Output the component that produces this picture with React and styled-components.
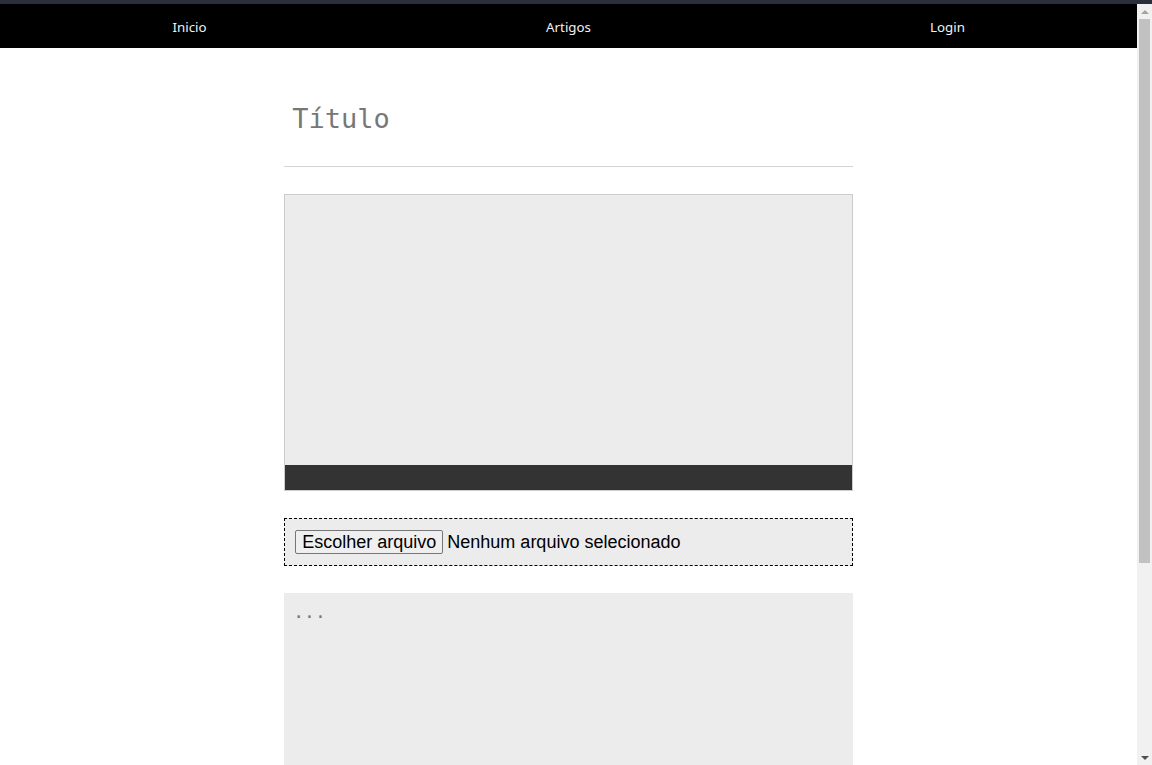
import React from 'react';
import styled, { createGlobalStyle } from 'styled-components';

const GlobalStyle = createGlobalStyle`
  html, body {
    margin: 0;
    padding: 0;
    height: 100%;
    overflow: hidden;
    background: #ffffff;
  }
  #root {
    height: 100%;
  }
  * {
    box-sizing: border-box;
  }
`;

const Frame = styled.div`
  height: 100vh;
  display: flex;
  border-top: 4px solid #2b2e3b;
`;

const Page = styled.div`
  flex: 1;
  min-width: 0;
  overflow-y: auto;
  scrollbar-width: none;
  background: #ffffff;

  &::-webkit-scrollbar {
    display: none;
  }
`;

// classic grey scrollbar drawn beside the page
const ScrollRail = styled.div`
  width: 15px;
  flex: none;
  display: flex;
  flex-direction: column;
  background: #f1f1f1;
`;

const ScrollArrow = styled.div`
  height: 15px;
  flex: none;
  display: flex;
  align-items: center;
  justify-content: center;
`;

const ArrowGlyph = styled.span`
  display: block;
  width: 0;
  height: 0;
  border-left: 4px solid transparent;
  border-right: 4px solid transparent;
  border-top: ${({ $down }) => ($down ? '4px solid #505050' : '0 solid transparent')};
  border-bottom: ${({ $down }) => ($down ? '0 solid transparent' : '4px solid #a3a3a3')};
`;

const ScrollTrack = styled.div`
  flex: 1;
  padding: 0 2px;
`;

const ScrollThumb = styled.div`
  height: 544px;
  background: #c1c1c1;
`;

const NavBar = styled.nav`
  display: grid;
  grid-template-columns: repeat(3, 1fr);
  height: 44px;
  background: #000000;
`;

const NavLink = styled.a`
  display: flex;
  align-items: center;
  justify-content: center;
  padding-top: 2px;
  color: #f2f2f2;
  font-family: "Noto Sans", "DejaVu Sans", sans-serif;
  font-size: 13.3px;
  text-decoration: none;
  cursor: pointer;
`;

const Editor = styled.main`
  width: 50%;
  margin: 47px auto 0;
  display: flex;
  flex-direction: column;
  gap: 27px;
  padding-bottom: 34px;
`;

const TitleField = styled.div`
  padding: 8px 8px 31px;
  border-bottom: 1px solid #d4d4d4;
  font-family: "DejaVu Sans Mono", monospace;
  font-size: 27px;
  line-height: 32px;
  color: #777777;
`;

const ImageBox = styled.div`
  height: 297px;
  border: 1px solid #cccccc;
  background: #ececec;
  display: flex;
  flex-direction: column;
`;

const Preview = styled.div`
  flex: 1;
`;

const PreviewBar = styled.div`
  height: 25px;
  background: #333333;
`;

const FileBox = styled.label`
  display: flex;
  align-items: center;
  gap: 4px;
  height: 48px;
  padding: 0 10px;
  border: 1px dashed #000000;
  background: #ececec;
  font-family: "Liberation Sans", Arial, sans-serif;
  font-size: 18px;
  color: #000000;
`;

const FileButton = styled.span`
  display: inline-flex;
  align-items: center;
  height: 24px;
  padding: 0 6px;
  border: 1px solid #767676;
  border-radius: 2px;
  background: #efefef;
  color: #000000;
`;

const FileName = styled.span`
  color: #000000;
`;

const Body = styled.textarea`
  height: 400px;
  resize: none;
  border: none;
  outline: none;
  padding: 8px 9px;
  background: #ececec;
  font-family: "DejaVu Sans Mono", monospace;
  font-size: 18px;
  line-height: 22px;
  color: #333333;

  &::placeholder {
    color: #777777;
  }
`;

export default function App() {
  return (
    <>
      <GlobalStyle />
      <Frame>
        <Page>
          <NavBar>
            <NavLink>Inicio</NavLink>
            <NavLink>Artigos</NavLink>
            <NavLink>Login</NavLink>
          </NavBar>
          <Editor>
            <TitleField>Título</TitleField>
            <ImageBox>
              <Preview />
              <PreviewBar />
            </ImageBox>
            <FileBox>
              <FileButton>Escolher arquivo</FileButton>
              <FileName>Nenhum arquivo selecionado</FileName>
            </FileBox>
            <Body placeholder="..." />
          </Editor>
        </Page>
        <ScrollRail>
          <ScrollArrow>
            <ArrowGlyph />
          </ScrollArrow>
          <ScrollTrack>
            <ScrollThumb />
          </ScrollTrack>
          <ScrollArrow>
            <ArrowGlyph $down />
          </ScrollArrow>
        </ScrollRail>
      </Frame>
    </>
  );
}
